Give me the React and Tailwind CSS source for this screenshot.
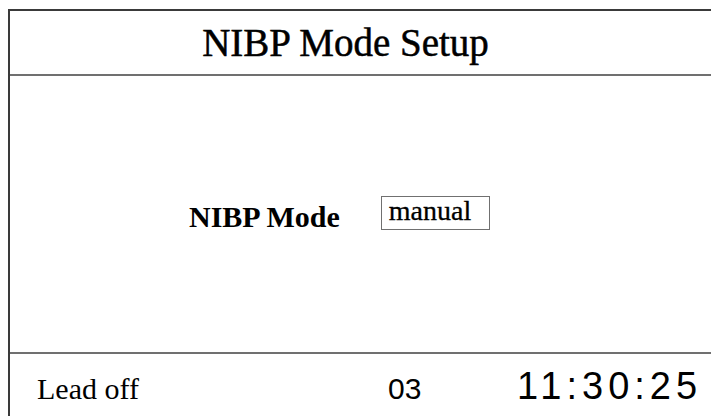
export default function App() {
    return (
        <div className="h-[416px] w-[711px] overflow-hidden bg-white pl-[8px] pt-[9px] font-['Liberation_Serif',serif] text-black">
            <div className="flex h-full flex-col border-l-2 border-t-2 border-[#3a3a3a]">
                <div className="flex h-[65px] shrink-0 items-center justify-center border-b-2 border-[#707070] pr-[30px]">
                    <h1 className="text-[39px] leading-none [-webkit-text-stroke:0.5px_black]">NIBP Mode Setup</h1>
                </div>
                <div className="h-[276px] shrink-0 pl-[179px] pt-[120px]">
                    <div className="flex items-start gap-[41px]">
                        <span className="mt-[6px] text-[30px] font-bold leading-none">NIBP Mode</span>
                        <div className="w-[109px] border border-[#707070] pb-[2px] pl-[7px]">
                            <span className="font-['Liberation_Serif',serif] text-[28px] leading-none [-webkit-text-stroke:0.3px_black]">
                                manual
                            </span>
                        </div>
                    </div>
                </div>
                <div className="flex flex-1 items-baseline border-t-2 border-[#707070] pl-[27px] pt-[13px] leading-none">
                    <span className="w-[351px] text-[30px]">Lead off</span>
                    <span className="w-[129px] font-['Liberation_Sans',sans-serif] text-[30px]">03</span>
                    <span className="font-['Liberation_Sans',sans-serif] text-[38px] tracking-[5px]">11:30:25</span>
                </div>
            </div>
        </div>
    );
}
